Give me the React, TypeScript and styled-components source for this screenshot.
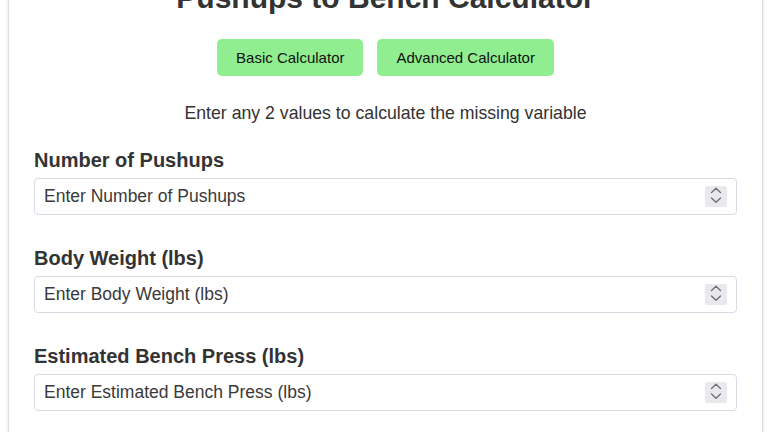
import React from "react";
import styled, { createGlobalStyle } from "styled-components";

const GlobalStyle = createGlobalStyle`
  html, body {
    margin: 0;
    padding: 0;
    background: #ffffff;
  }
  body {
    font-family: "Liberation Sans", Arial, sans-serif;
    color: #333333;
    overflow: hidden;
  }
`;

const Container = styled.div`
  margin: -40px 5px 0 8px;
  padding: 20px 25px 40px;
  background: #ffffff;
  border: 1px solid #dddddd;
  box-shadow: 0 0 4px rgba(0, 0, 0, 0.12);
`;

const Title = styled.h1`
  margin: 0 0 24px;
  font-size: 30px;
  line-height: 34px;
  font-weight: 700;
  text-align: center;
  color: #333333;
`;

const ModeRow = styled.div`
  display: flex;
  justify-content: center;
  gap: 14px;
  margin-bottom: 27px;
`;

const ModeButton = styled.button`
  padding: 10px 19px;
  border: none;
  border-radius: 5px;
  background: #90ee90;
  color: #111111;
  font-family: "Liberation Sans", Arial, sans-serif;
  font-size: 15px;
  line-height: 17px;
  cursor: pointer;
`;

const Hint = styled.p`
  margin: 0 0 26px;
  font-size: 17.7px;
  line-height: 20px;
  text-align: center;
  color: #333333;
`;

const FieldGroup = styled.div`
  margin-bottom: 32px;
`;

const Label = styled.label`
  display: block;
  margin-bottom: 7px;
  font-size: 20px;
  line-height: 22px;
  font-weight: 700;
  color: #333333;
`;

const InputBox = styled.div`
  display: flex;
  align-items: center;
  height: 37px;
  box-sizing: border-box;
  padding: 0 9px;
  border: 1px solid #d6dce4;
  border-radius: 4px;
  background: #ffffff;
`;

const NumberInput = styled.input`
  flex: 1;
  min-width: 0;
  padding: 0;
  border: none;
  outline: none;
  background: transparent;
  font-family: "Liberation Sans", Arial, sans-serif;
  font-size: 17.5px;
  color: #333333;
  &::placeholder {
    color: #3a3a3a;
    opacity: 1;
  }
  &::-webkit-inner-spin-button,
  &::-webkit-outer-spin-button {
    -webkit-appearance: none;
    margin: 0;
  }
  -moz-appearance: textfield;
`;

const Spinner = styled.span`
  display: flex;
  width: 22px;
  height: 21px;
  border-radius: 2px;
  background: #e9e9ed;
`;

const SpinIcon = () => (
  <svg width="22" height="21" viewBox="0 0 22 21" fill="none">
    <path d="M6.5 6.5 L11 2.3 L15.5 6.5" stroke="#6e6e73" strokeWidth="1.3" strokeLinecap="round" strokeLinejoin="round" />
    <path d="M6.5 12 L11 16.2 L15.5 12" stroke="#6e6e73" strokeWidth="1.3" strokeLinecap="round" strokeLinejoin="round" />
  </svg>
);

const fields = [
  { id: "pushups", label: "Number of Pushups" },
  { id: "weight", label: "Body Weight (lbs)" },
  { id: "bench", label: "Estimated Bench Press (lbs)" },
];

const App = () => {
  return (
    <>
      <GlobalStyle />
      <Container>
        <Title>Pushups to Bench Calculator</Title>
        <ModeRow>
          <ModeButton>Basic Calculator</ModeButton>
          <ModeButton>Advanced Calculator</ModeButton>
        </ModeRow>
        <Hint>Enter any 2 values to calculate the missing variable</Hint>
        {fields.map((f) => (
          <FieldGroup key={f.id}>
            <Label htmlFor={f.id}>{f.label}</Label>
            <InputBox>
              <NumberInput id={f.id} type="number" placeholder={`Enter ${f.label}`} />
              <Spinner>
                <SpinIcon />
              </Spinner>
            </InputBox>
          </FieldGroup>
        ))}
      </Container>
    </>
  );
};

export default App;
